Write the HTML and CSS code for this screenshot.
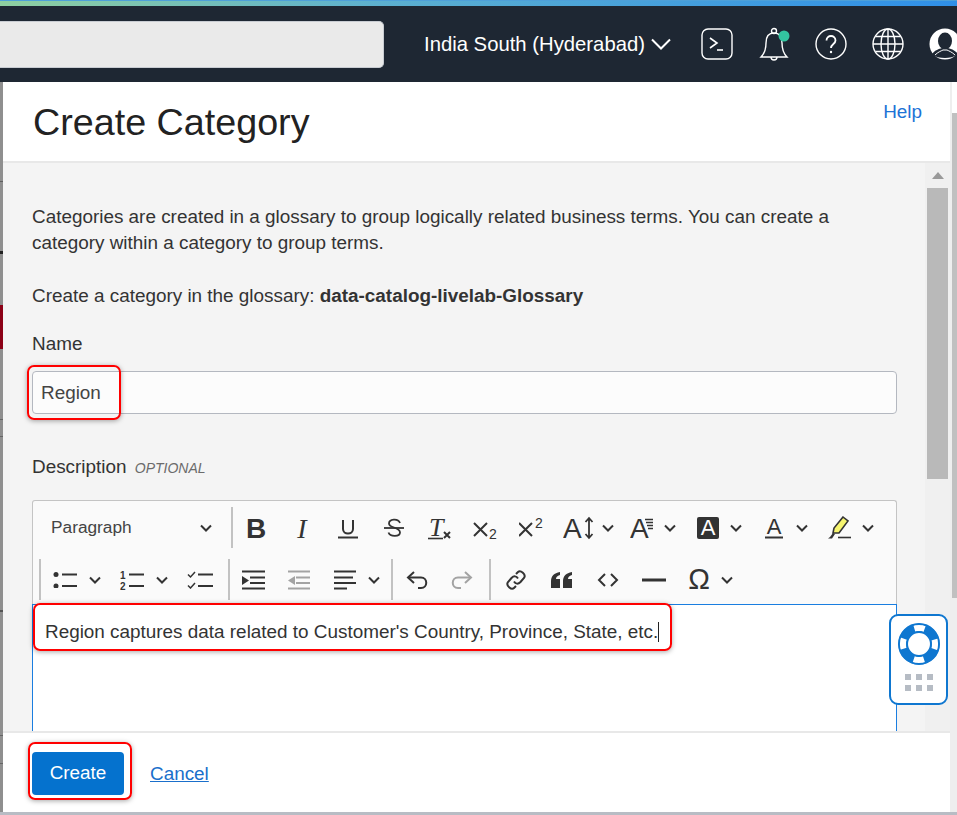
FILE: index.html
```html
<!DOCTYPE html>
<html lang="en">
  <head>
    <meta charset="UTF-8" />
    <title>Create Category</title>
    <link rel="stylesheet" href="styles.css">
  </head>
  <body>
    <svg class="defs" width="0" height="0">
      <symbol id="chev" viewBox="0 0 12 8">
        <path d="M1 1.5 6 6.5 11 1.5" fill="none" stroke="#333" stroke-width="2" />
      </symbol>
    </svg>

    <div class="top-strip"></div>

    <header class="console-bar">
      <div class="search-box"></div>
      <div class="region">India South (Hyderabad)</div>
      <svg class="region-chev" width="20" height="12" viewBox="0 0 20 12">
        <path d="M1 1.5 10 10.5 19 1.5" fill="none" stroke="#fff" stroke-width="2" />
      </svg>
      <div class="console-icons">
        <svg width="32" height="32" viewBox="0 0 32 32" fill="none" stroke="#fff">
          <rect x="1" y="1" width="30" height="30" rx="6" stroke-width="1.4" />
          <path d="M9 10 16 15 9 20" stroke-width="1.6" />
          <path d="M16 22H22" stroke-width="1.6" />
        </svg>
        <svg width="32" height="34" viewBox="0 0 32 34" fill="none" stroke="#fff" stroke-width="1.4">
          <path d="M3 30C7 26 8 21 8 16 8 9 11 6 16 6S24 9 24 16C24 21 25 26 29 30Z" />
          <circle cx="16" cy="4" r="2.5" />
          <path d="M13 30C13 34 19 34 19 30" />
          <circle cx="26" cy="9" r="5.5" fill="#33c5a0" stroke="none" />
        </svg>
        <svg width="32" height="32" viewBox="0 0 32 32" fill="none" stroke="#fff" stroke-width="1.4">
          <circle cx="16" cy="16" r="15" />
          <path d="M11.5 12.5C11.5 6.5 20.5 6.5 20.5 12.5 20.5 16 16 16 16 20" stroke-width="1.8" />
          <circle cx="16" cy="24" r="1.2" fill="#fff" stroke="none" />
        </svg>
        <svg width="32" height="32" viewBox="0 0 32 32" fill="none" stroke="#fff" stroke-width="1.4">
          <circle cx="16" cy="16" r="15" />
          <ellipse cx="16" cy="16" rx="7" ry="15" />
          <path d="M16 1V31M1 16H31M3.5 8.5H28.5M3.5 23.5H28.5" />
        </svg>
        <svg width="32" height="32" viewBox="0 0 32 32">
          <circle cx="16" cy="16" r="15.5" fill="#fff" />
          <ellipse cx="16" cy="13" rx="7" ry="8.5" fill="#1e2733" />
          <path d="M3 26C6 22 10 21 13 20H19C22 21 26 22 29 26 26 29 21 30 16 30S6 29 3 26Z" fill="#1e2733" />
          <path d="M6 27C9 24 12 23 14 22H18C20 23 23 24 26 27" fill="none" stroke="#fff" stroke-width="1" />
        </svg>
      </div>
    </header>

    <div class="workspace">
      <div class="page-edge"></div>

      <main class="panel">
        <div class="panel-head">
          <h1>Create Category</h1>
          <a class="help-link" href="#">Help</a>
        </div>

        <div class="panel-body">
          <div class="form-area">
            <p class="intro">Categories are created in a glossary to group logically related business terms. You can create a category within a category to group terms.</p>
            <p class="glossary-line">Create a category in the glossary: <b>data-catalog-livelab-Glossary</b></p>

            <label class="field-label name-label" for="name">Name</label>
            <div class="name-field">
              <input id="name" class="text-input" type="text" value="Region" />
              <span class="callout callout-name"></span>
            </div>

            <div class="field-label desc-label">Description <span class="optional">OPTIONAL</span></div>

            <div class="toolbar">
              <div class="tb-row">
                <div class="tb-heading">
                  <span>Paragraph</span>
                  <svg width="12" height="8"><use href="#chev" /></svg>
                </div>
                <i class="sep"></i>
                <div class="tb-btn">
                  <svg width="28" height="34" viewBox="0 0 28 34"><text x="14" y="27" text-anchor="middle" class="glyph bold">B</text></svg>
                </div>
                <div class="tb-btn">
                  <svg width="28" height="34" viewBox="0 0 28 34"><text x="14" y="27" text-anchor="middle" class="glyph ital">I</text></svg>
                </div>
                <div class="tb-btn">
                  <svg width="24" height="24" viewBox="0 0 24 24" fill="none" stroke="#333" stroke-width="2">
                    <path d="M7 4V13C7 19 17 19 17 13V4" />
                    <path d="M2 21.5H22" />
                  </svg>
                </div>
                <div class="tb-btn">
                  <svg width="24" height="24" viewBox="0 0 24 24" fill="none" stroke="#333" stroke-width="1.8">
                    <path d="M18 7C16 2 7 3 7 7.500 7 9.500 9 10.500 12 11.500 15 12.500 18 13.500 18 16.500 18 21 8 21 6.500 16.500" />
                    <path d="M2 12H22" />
                  </svg>
                </div>
                <div class="tb-btn">
                  <svg width="24" height="34" viewBox="0 0 24 34">
                    <text x="1" y="25" class="glyph ital tx">T</text>
                    <path d="M0 27.500H15" stroke="#333" stroke-width="1.600" />
                    <path d="M16 21 22 27M22 21 16 27" stroke="#333" stroke-width="2" />
                  </svg>
                </div>
                <div class="tb-btn">
                  <svg width="26" height="34" viewBox="0 0 26 34">
                    <path d="M1 12 14 25M14 12 1 25" stroke="#333" stroke-width="2" />
                    <text x="16" y="28" class="glyph small">2</text>
                  </svg>
                </div>
                <div class="tb-btn">
                  <svg width="26" height="34" viewBox="0 0 26 34">
                    <path d="M0 12 13 25M13 12 0 25" stroke="#333" stroke-width="2" />
                    <text x="16" y="17" class="glyph small">2</text>
                  </svg>
                </div>
                <div class="tb-split narrow">
                  <span class="tb-icon">
                    <svg width="32" height="34" viewBox="0 0 32 34">
                      <text x="0" y="27" class="glyph big">A</text>
                      <path d="M26 8V26M22.500 11 26 7 29.500 11M22.500 23 26 27 29.500 23" fill="none" stroke="#333" stroke-width="1.800" />
                    </svg>
                  </span>
                  <svg width="12" height="8"><use href="#chev" /></svg>
                </div>
                <div class="tb-split">
                  <span class="tb-icon">
                    <svg width="24" height="34" viewBox="0 0 24 34">
                      <text x="0" y="27" class="glyph big">A</text>
                      <path d="M15 8.500H23M16 11.500H23M17 14.500H23M18 17.500H23" stroke="#333" stroke-width="1.400" />
                    </svg>
                  </span>
                  <svg width="12" height="8"><use href="#chev" /></svg>
                </div>
                <div class="tb-split">
                  <span class="tb-icon">
                    <svg width="22" height="28" viewBox="0 0 22 28">
                      <rect y="3" width="22" height="22" rx="2" fill="#333" />
                      <text x="11" y="21" text-anchor="middle" class="glyph mid white">A</text>
                    </svg>
                  </span>
                  <svg width="12" height="8"><use href="#chev" /></svg>
                </div>
                <div class="tb-split">
                  <span class="tb-icon">
                    <svg width="20" height="30" viewBox="0 0 20 30">
                      <text x="10" y="21" text-anchor="middle" class="glyph mid">A</text>
                      <path d="M1 24.500H19" stroke="#333" stroke-width="2" />
                    </svg>
                  </span>
                  <svg width="12" height="8"><use href="#chev" /></svg>
                </div>
                <div class="tb-split">
                  <span class="tb-icon">
                    <svg width="27" height="24" viewBox="0 0 27 24">
                      <path d="M16 1 21 5 12 17H6L7 12 Z" fill="#f6f56f" stroke="#333" stroke-width="1.600" />
                      <path d="M6 17 3 21 1 22.500H5L8 18Z" fill="#333" />
                      <path d="M11 21.500H24" stroke="#333" stroke-width="1.600" />
                    </svg>
                  </span>
                  <svg width="12" height="8"><use href="#chev" /></svg>
                </div>
              </div>

              <div class="tb-row second">
                <i class="sep"></i>
                <div class="tb-split wide">
                  <span class="tb-icon">
                    <svg width="24" height="16" viewBox="0 0 24 16" stroke="#333" stroke-width="2">
                      <circle cx="3" cy="2.500" r="2.500" fill="#333" stroke="none" />
                      <circle cx="3" cy="14" r="2.500" fill="#333" stroke="none" />
                      <path d="M9 2.500H24M9 14H24" />
                    </svg>
                  </span>
                  <svg width="12" height="8"><use href="#chev" /></svg>
                </div>
                <div class="tb-split wide">
                  <span class="tb-icon">
                    <svg width="24" height="26" viewBox="0 0 24 26">
                      <text x="0" y="11.500" class="glyph tiny">1</text>
                      <text x="0" y="23" class="glyph tiny">2</text>
                      <path d="M9 7.500H24M9 19H24" stroke="#333" stroke-width="2" />
                    </svg>
                  </span>
                  <svg width="12" height="8"><use href="#chev" /></svg>
                </div>
                <div class="tb-btn todo">
                  <svg width="26" height="18" viewBox="0 0 26 18" fill="none" stroke="#333">
                    <path d="M1 3.500 3.500 6 8 1M1 14.500 3.500 17 8 12" stroke-width="1.500" />
                    <path d="M11 3.500H26M11 15H26" stroke-width="2" />
                  </svg>
                </div>
                <i class="sep near"></i>
                <div class="tb-btn">
                  <svg width="24" height="20" viewBox="0 0 24 20" stroke="#333" stroke-width="2">
                    <path d="M1 1.500H24M9 7.500H24M9 13H24M1 18.500H24" />
                    <path d="M1 6 8 10.500 1 15Z" fill="#333" stroke="none" />
                  </svg>
                </div>
                <div class="tb-btn">
                  <svg width="24" height="20" viewBox="0 0 24 20" stroke="#a3a3a3" stroke-width="2">
                    <path d="M1 1.500H23M9 7.500H23M9 13H23M1 18.500H23" />
                    <path d="M8 6 1 10.500 8 15Z" fill="#a3a3a3" stroke="none" />
                  </svg>
                </div>
                <div class="tb-split align">
                  <span class="tb-icon">
                    <svg width="22" height="20" viewBox="0 0 22 20" stroke="#333" stroke-width="2">
                      <path d="M0 1.500H22M0 7.500H19M0 13H22M0 18.500H13" />
                    </svg>
                  </span>
                  <svg width="12" height="8"><use href="#chev" /></svg>
                </div>
                <i class="sep far"></i>
                <div class="tb-btn">
                  <svg width="22" height="18" viewBox="0 0 22 18" fill="none" stroke="#333" stroke-width="2">
                    <path d="M8 1 2 6.500 8 12" />
                    <path d="M2 6.500H15C22 6.500 22 17 15 17H12" />
                  </svg>
                </div>
                <div class="tb-btn redo">
                  <svg width="22" height="18" viewBox="0 0 22 18" fill="none" stroke="#a3a3a3" stroke-width="2">
                    <path d="M14 1 20 6.500 14 12" />
                    <path d="M20 6.500H7C0 6.500 0 17 7 17H10" />
                  </svg>
                </div>
                <i class="sep far"></i>
                <div class="tb-btn">
                  <svg width="22" height="22" viewBox="0 0 22 22" fill="none" stroke="#333" stroke-width="2">
                    <path d="M11 5 13 3C15.500 .5 21.500 5.500 19 9L15.500 13C13 15.500 10.500 15 9 12.500" />
                    <path d="M11 17 9 19C6.500 21.500 .5 16.500 3 13L6.500 9C9 6.500 11.500 7 13 9.500" />
                  </svg>
                </div>
                <div class="tb-btn">
                  <svg width="22" height="16" viewBox="0 0 22 16" fill="#333">
                    <path d="M0 9C0 4 3 1 9 0V3C6 4 5 5 5 7H9V16H0ZM12 9C12 4 15 1 21 0V3C18 4 17 5 17 7H21V16H12Z" />
                  </svg>
                </div>
                <div class="tb-btn">
                  <svg width="22" height="14" viewBox="0 0 22 14" fill="none" stroke="#333" stroke-width="2">
                    <path d="M8 1 2 7 8 13M14 1 20 7 14 13" />
                  </svg>
                </div>
                <div class="tb-btn">
                  <svg width="24" height="4" viewBox="0 0 24 4"><path d="M0 2H24" stroke="#333" stroke-width="3" /></svg>
                </div>
                <div class="tb-split">
                  <span class="tb-icon">
                    <svg width="26" height="36" viewBox="0 0 26 36">
                      <text x="13" y="27" text-anchor="middle" class="glyph omega">Ω</text>
                    </svg>
                  </span>
                  <svg width="12" height="8"><use href="#chev" /></svg>
                </div>
              </div>
            </div>

            <div class="editor">
              Region captures data related to Customer's Country, Province, State, etc.<span class="caret"></span>
              <span class="callout callout-editor"></span>
            </div>
          </div>

          <div class="scroll-track">
            <div class="scroll-up"></div>
            <div class="scroll-thumb"></div>
          </div>
        </div>

        <div class="panel-foot">
          <button class="btn-create">Create<span class="callout callout-create"></span></button>
          <a class="cancel-link" href="#">Cancel</a>
        </div>
      </main>

      <div class="outer-scroll"></div>

      <div class="help-widget">
        <svg width="42" height="42" viewBox="0 0 44 44">
          <circle cx="22" cy="22" r="17" fill="none" stroke="#0f77d0" stroke-width="9" />
          <circle cx="22" cy="22" r="17" fill="none" stroke="#fff" stroke-width="7" stroke-dasharray="11 15.700" stroke-dashoffset="5.500" />
          <circle cx="22" cy="22" r="21" fill="none" stroke="#0f77d0" stroke-width="2" />
          <circle cx="22" cy="22" r="12.500" fill="#fff" stroke="#0f77d0" stroke-width="2" />
        </svg>
        <div class="widget-dots">
          <i></i><i></i><i></i><i></i><i></i><i></i>
        </div>
      </div>
    </div>

    <div class="bottom-line"></div>
  </body>
</html>
```

FILE: styles.css
```css
* {
  box-sizing: border-box;
}
html,
body {
  height: 100%;
}
body {
  margin: 0;
  display: flex;
  flex-direction: column;
  overflow: hidden;
  font-family: "Liberation Sans", Arial, sans-serif;
  font-size: 18.9px;
  color: #333;
  background: #fff;
}
.defs {
  position: absolute;
}

.top-strip {
  height: 6px;
  flex: none;
  background: linear-gradient(90deg, #8fd0a0 0, #5cb0d0 40%, #2f8fe8 100%);
  border-top: 1px solid #4ea0d8;
}
.console-bar {
  height: 76px;
  flex: none;
  display: flex;
  align-items: center;
  background: #1e2733;
  color: #fff;
  overflow: hidden;
}
.search-box {
  width: 384px;
  height: 47px;
  flex: none;
  margin-top: 1px;
  background: #eaeaea;
  border: 1px solid #c8ccd2;
  border-left: 0;
  border-radius: 0 5px 5px 0;
}
.region {
  margin-left: 40px;
  font-size: 20.3px;
  white-space: nowrap;
  flex: none;
}
.region-chev {
  margin-left: 6px;
  flex: none;
}
.console-icons {
  display: flex;
  align-items: center;
  gap: 25px;
  margin-left: 30px;
  flex: none;
}
.console-icons svg {
  flex: none;
}

.workspace {
  position: relative;
  flex: 1;
  min-height: 0;
  display: flex;
}
.page-edge {
  width: 3px;
  flex: none;
  background: linear-gradient(
    180deg,
    #8f8f8f 0 99px,
    #5f5f5f 99px 100px,
    #8f8f8f 100px 169px,
    #222 169px 172px,
    #8f8f8f 172px 223px,
    #8c0016 223px 267px,
    #8f8f8f 267px 337px,
    #666 337px 338px,
    #8f8f8f 338px 354px,
    #666 354px 355px,
    #8f8f8f 355px 528px,
    #555 528px 530px,
    #8f8f8f 530px 653px,
    #666 653px 654px,
    #8f8f8f 654px 681px,
    #666 681px 682px,
    #8f8f8f 682px
  );
}
.panel {
  width: 947px;
  flex: none;
  display: flex;
  flex-direction: column;
  background: #fff;
}
.panel-head {
  height: 81px;
  flex: none;
  display: flex;
  justify-content: space-between;
  padding: 0 28px 0 30px;
  border-bottom: 2px solid #e8e8e8;
}
.panel-head h1 {
  margin: 19px 0 0;
  font-size: 37.7px;
  font-weight: normal;
  line-height: 42px;
  color: #222;
}
.help-link {
  margin-top: 19px;
  line-height: 22px;
  color: #1e73d6;
  text-decoration: none;
}
.panel-body {
  flex: 1;
  min-height: 0;
  display: flex;
  background: #f4f4f4;
  overflow: hidden;
}
.form-area {
  width: 922px;
  flex: none;
  padding: 41px 28px 0 29px;
}
.intro {
  margin: 0;
  line-height: 26px;
}
.glossary-line {
  margin: 27px 0 0;
  line-height: 26px;
}
.field-label {
  display: block;
  line-height: 22px;
}
.name-label {
  margin-top: 24px;
}
.name-field {
  position: relative;
  margin-top: 16px;
}
.text-input {
  display: block;
  width: 100%;
  height: 43px;
  padding: 0 8px;
  font: inherit;
  color: #444;
  background: #fcfcfc;
  border: 1px solid #b4b8c0;
  border-radius: 4px;
}
.desc-label {
  margin-top: 42px;
}
.optional {
  margin-left: 3px;
  font-size: 14px;
  font-style: italic;
  color: #6b6b6b;
}
.toolbar {
  height: 104px;
  margin-top: 21px;
  padding-top: 6px;
  background: #fafafa;
  border: 1px solid #c4c4c4;
  border-bottom: 0;
  border-radius: 3px 3px 0 0;
}
.tb-row {
  display: flex;
  align-items: center;
  height: 41px;
}
.tb-row.second {
  margin-top: 11px;
}
.sep {
  width: 2px;
  height: 41px;
  flex: none;
  background: #c2c2c2;
}
.tb-heading {
  width: 198px;
  flex: none;
  display: flex;
  justify-content: space-between;
  align-items: center;
  padding: 0 19px 0 18px;
  font-size: 17.3px;
  color: #444;
}
.tb-btn {
  width: 46px;
  flex: none;
  display: flex;
  justify-content: center;
  align-items: center;
}
.tb-split {
  width: 66px;
  flex: none;
  display: flex;
  align-items: center;
}
.tb-split.narrow {
  width: 65px;
}
.tb-split.wide {
  width: 67px;
}
.tb-split.align {
  width: 58px;
}
.tb-icon {
  width: 44px;
  flex: none;
  display: flex;
  justify-content: center;
}
.narrow .tb-icon {
  width: 47px;
}
.wide .tb-icon {
  width: 48px;
}
.align .tb-icon {
  width: 46px;
}
.tb-row.second > .sep:first-child {
  margin-left: 6px;
}
.tb-btn.todo {
  width: 50px;
}
.sep.near {
  margin-left: 3px;
}
.sep.far {
  margin: 0 1px 0 11px;
}
.tb-btn.redo {
  width: 44px;
}
.tb-btn.redo + .sep.far {
  margin: 0 2px 0 5px;
}
.glyph {
  font-family: "Liberation Sans", Arial, sans-serif;
  fill: #333;
}
.glyph.bold {
  font-size: 28px;
  font-weight: bold;
}
.glyph.ital {
  font-family: "Liberation Serif", serif;
  font-size: 28px;
  font-style: italic;
}
.glyph.tx {
  font-size: 26px;
}
.glyph.small {
  font-size: 14px;
}
.glyph.tiny {
  font-size: 10px;
  font-weight: bold;
}
.glyph.big {
  font-size: 28px;
}
.glyph.omega {
  font-size: 29px;
}
.glyph.mid {
  font-size: 22px;
}
.glyph.white {
  fill: #fff;
}
.editor {
  position: relative;
  height: 300px;
  padding: 15px 12px;
  line-height: 24px;
  color: #333;
  background: #fff;
  border: 1px solid #1a7ee0;
}
.caret {
  display: inline-block;
  width: 1px;
  height: 20px;
  vertical-align: -4px;
  background: #222;
}
.scroll-track {
  width: 25px;
  flex: none;
  padding: 0 2px;
  background: #f0f0f0;
}
.scroll-up {
  width: 0;
  margin: 9px auto 0;
  border: 6px solid transparent;
  border-top: 0;
  border-bottom: 7px solid #999;
}
.scroll-thumb {
  height: 291px;
  margin-top: 9px;
  background: #b9b9b9;
}
.panel-foot {
  height: 81px;
  flex: none;
  display: flex;
  align-items: center;
  gap: 26px;
  padding: 0 0 0 29px;
  background: #fff;
  border-top: 2px solid #e8e8e8;
}
.btn-create {
  position: relative;
  width: 92px;
  height: 43px;
  margin-top: 1px;
  font: inherit;
  color: #fff;
  background: #0572ce;
  border: 0;
  border-radius: 4px;
}
.cancel-link {
  margin-top: 2px;
  color: #1a6fcb;
}
.outer-scroll {
  flex: 1;
  background: linear-gradient(
    180deg,
    #fff 0 31px,
    #c0c0c0 31px 516px,
    #eee 516px
  );
  border-left: 2px solid #eee;
}
.bottom-line {
  height: 3px;
  flex: none;
  background: #b8bcc4;
}

/* red annotation boxes drawn on the screenshot */
.callout {
  position: absolute;
  border: 2px solid #f00;
  border-radius: 7px;
  box-shadow: 0 1px 5px rgba(0, 0, 0, 0.35);
  pointer-events: none;
}
.callout-name {
  left: -5px;
  top: -6px;
  width: 94px;
  height: 55px;
}
.callout-editor {
  left: 0;
  top: -2px;
  width: 639px;
  height: 48px;
}
.callout-create {
  left: -4px;
  top: -10px;
  width: 104px;
  height: 58px;
}

.help-widget {
  position: absolute;
  left: 889px;
  top: 532px;
  width: 59px;
  height: 91px;
  display: flex;
  flex-direction: column;
  align-items: center;
  padding-top: 7px;
  background: #fff;
  border: 2px solid #0f77d0;
  border-radius: 9px;
}
.widget-dots {
  display: grid;
  grid-template-columns: repeat(3, 6px);
  gap: 5px 5px;
  margin-top: 9px;
}
.widget-dots i {
  height: 6px;
  background: #b6bcc4;
}
```
